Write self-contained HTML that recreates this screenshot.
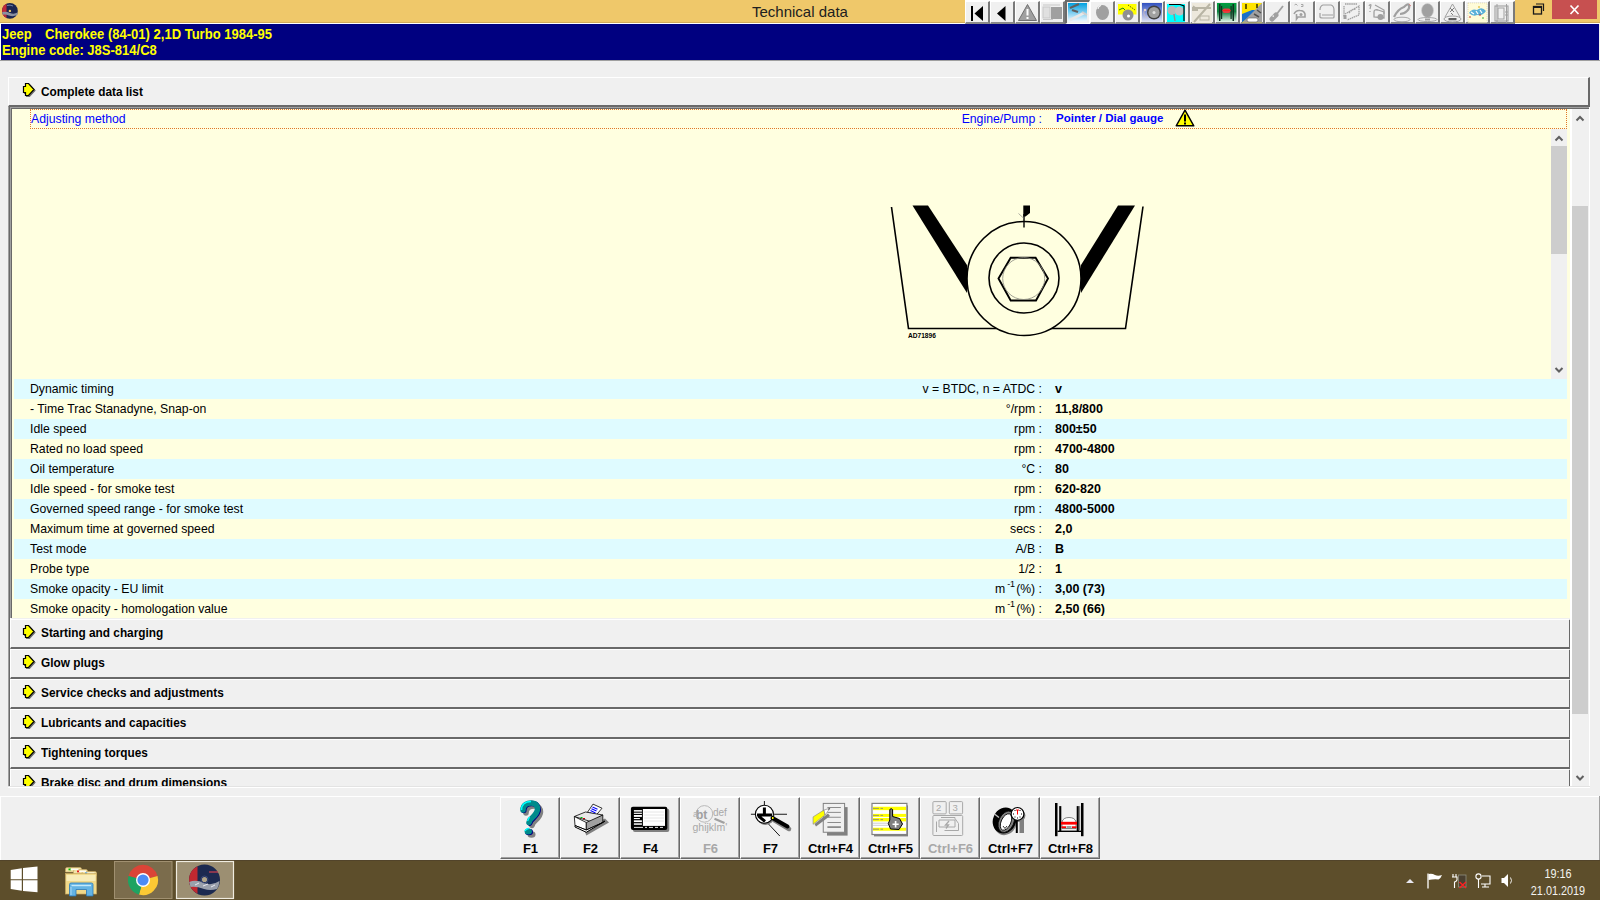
<!DOCTYPE html>
<html><head><meta charset="utf-8">
<style>
*{box-sizing:border-box;margin:0;padding:0}
html,body{width:1600px;height:900px;overflow:hidden;background:#f0f0f0;font-family:"Liberation Sans",sans-serif;position:relative}
.a{position:absolute}
#title{left:0;top:0;width:1600px;height:22px;background:#efc86a}
#title .txt{left:752px;top:3px;font-size:15px;color:#202020;white-space:nowrap}
#navy{left:1px;top:24px;width:1598px;height:36px;background:#000080;color:#ffff00;font-weight:bold;font-size:14px;white-space:pre}
#navy div{transform:scaleX(0.93);transform-origin:0 0}
.hdr{background:#f0f0f0;border-top:1px solid #fff;border-left:1px solid #fff;border-bottom:2px solid #696969;border-right:2px solid #696969}
.hdr .t{left:32px;top:6px;font-weight:bold;font-size:13px;color:#000;white-space:nowrap;transform:scaleX(0.91);transform-origin:0 0}
.hdr svg{position:absolute;left:13px;top:5px}
.row{left:14px;width:1553px;height:20px;font-size:12.25px;color:#000;white-space:nowrap}
.row .l{left:16px;top:3px}
.row .u{right:525px;top:3px;text-align:right}
.row .v{left:1041px;top:3px;font-weight:bold;font-size:12.5px}
sup{font-size:9px;vertical-align:0;position:relative;top:-6px;margin-left:2px;margin-right:1px}
.b{background:#dffbff}
.y{background:#ffffe0}
.tb{top:1px;width:25px;height:23px;background:#f0f0f0;border-right:2px solid #7a7a7a;border-bottom:2px solid #8a8a8a;border-left:1px solid #fff;border-top:1px solid #fff}
.fb{top:797px;width:60px;height:62px;background:#f0f0f0;border-left:1px solid #fff;border-top:1px solid #fff;border-right:1px solid #696969;border-bottom:1px solid #696969;box-shadow:inset -1px -1px 0 #a0a0a0}
.fb .k{left:1px;width:57px;top:43px;text-align:center;font-weight:bold;font-size:13px;color:#000}
.fb svg{position:absolute;left:0;top:0}
.sb{background:#f0f0f0}
</style></head><body>
<!-- title bar -->
<div id="title" class="a">
  <div class="txt a">Technical data</div>
</div>
<div class="a" style="left:0;top:22px;width:1600px;height:1px;background:#d2ab5a"></div>
<div class="a" style="left:0;top:23px;width:1600px;height:1px;background:#fff"></div>
<!-- app icon -->
<svg class="a" style="left:1px;top:2px" width="18" height="18" viewBox="0 0 18 18">
  <circle cx="8.9" cy="8.9" r="7.9" fill="#1c2550"/>
  <path d="M5.5 1.8 A7.9 7.9 0 0 0 5.5 16 Z" fill="#c02838"/>
  <path d="M1.2 10 Q5 9 9 11 Q13 12.5 16.6 10.5 L16.4 13 Q12 15 8 13.5 Q4 12 1.6 12.8 Z" fill="#8a90a0"/>
  <path d="M6 3.5 Q9 2.5 12 4" stroke="#7080a8" stroke-width="1" fill="none"/>
  <circle cx="8.9" cy="8.9" r="1.2" fill="#efc86a"/>
</svg>
<!-- window controls -->
<svg class="a" style="left:1532px;top:3px" width="14" height="12" viewBox="0 0 14 12">
  <rect x="1.5" y="3.5" width="8" height="7.5" fill="none" stroke="#1a1a1a" stroke-width="1.3"/>
  <rect x="1.5" y="3.5" width="8" height="1.5" fill="#1a1a1a"/>
  <path d="M4 1 H11.5 V8" fill="none" stroke="#1a1a1a" stroke-width="1.2"/>
</svg>
<div class="a" style="left:1552px;top:0;width:45px;height:19px;background:#c75050"></div>
<svg class="a" style="left:1568px;top:4px" width="14" height="12" viewBox="0 0 14 12">
  <path d="M2.5 1.5 L10.5 10 M10.5 1.5 L2.5 10" stroke="#fff" stroke-width="1.7"/>
</svg>
<!-- toolbar -->
<div id="toolbar" class="a" style="left:965px;top:0;width:550px;height:25px;background:#fff"></div>
<div class="a tb" style="left:965px"></div>
<svg class="a" style="left:965px;top:0" width="25" height="25" viewBox="0 0 25 25"><rect x="6" y="6" width="2" height="15" fill="#000"/><polygon points="9.5,13.5 18,6 18,21" fill="#000"/></svg>
<div class="a tb" style="left:990px"></div>
<svg class="a" style="left:990px;top:0" width="25" height="25" viewBox="0 0 25 25"><polygon points="7,13.5 15.5,6 15.5,21" fill="#000"/></svg>
<div class="a tb" style="left:1015px"></div>
<svg class="a" style="left:1015px;top:0" width="25" height="25" viewBox="0 0 25 25"><polygon points="12.5,4.5 21.5,20.5 3.5,20.5" fill="#a0a0a0" stroke="#707070" stroke-width="1" stroke-linejoin="round"/><rect x="11.5" y="9" width="2" height="6.5" fill="#fff"/><rect x="11.5" y="17" width="2" height="2" fill="#fff"/></svg>
<div class="a tb" style="left:1040px"></div>
<svg class="a" style="left:1040px;top:0" width="25" height="25" viewBox="0 0 25 25"><rect x="3" y="4.5" width="17" height="1" fill="#c8c8c8"/><rect x="3" y="7" width="7" height="11" fill="#e0e0e0" stroke="#c8c8c8"/><rect x="11" y="7" width="11" height="12" fill="#a0a0a0"/><rect x="3" y="19" width="10" height="1" fill="#c8c8c8"/></svg>
<div class="a" style="left:1065px;top:0;width:25px;height:24px;background:#f0f0f0;border-left:2px solid #6a6a6a;border-top:2px solid #6a6a6a;border-right:1px solid #fff;border-bottom:1px solid #fff"></div>
<svg class="a" style="left:1065px;top:0" width="25" height="25" viewBox="0 0 25 25"><defs><linearGradient id="g5" x1="0" y1="0" x2="0" y2="1"><stop offset="0" stop-color="#00a0e0"/><stop offset="1" stop-color="#f0f8ff"/></linearGradient>
<linearGradient id="g8" x1="0" y1="0" x2="0" y2="1"><stop offset="0" stop-color="#3050c0"/><stop offset="1" stop-color="#e0e4f4"/></linearGradient>
<linearGradient id="g11" x1="0" y1="0" x2="0" y2="1"><stop offset="0" stop-color="#00a040"/><stop offset="0.45" stop-color="#108040"/><stop offset="1" stop-color="#e8f8ec"/></linearGradient></defs>
<rect x="3" y="3" width="19" height="18.5" fill="url(#g5)"/>
<path d="M5 8 L14 4 M7 10 L13 12" stroke="#606060" stroke-width="2.2"/>
<path d="M5 20 L19 13" stroke="#e8e8e8" stroke-width="2.6"/><path d="M17 12 L22 15" stroke="#d0d0d0" stroke-width="2"/></svg>
<div class="a tb" style="left:1090px"></div>
<svg class="a" style="left:1090px;top:0" width="25" height="25" viewBox="0 0 25 25"><ellipse cx="12.5" cy="12.5" rx="6.5" ry="7.5" fill="#a0a0a0"/><path d="M8 9 Q8.5 6 11 5.5" stroke="#fff" stroke-width="1" fill="none"/></svg>
<div class="a tb" style="left:1115px"></div>
<svg class="a" style="left:1115px;top:0" width="25" height="25" viewBox="0 0 25 25"><rect x="3" y="4" width="18.5" height="10.5" fill="#ffff00"/><path d="M4 10 L8 8 L10 10" stroke="#208020" stroke-width="1" fill="none"/><path d="M13 5 L20 10" stroke="#404000" stroke-width="0.8" stroke-dasharray="1.5 1"/><circle cx="13" cy="15" r="5.5" fill="#909090"/><circle cx="13.5" cy="16" r="1.5" fill="#fff"/></svg>
<div class="a tb" style="left:1140px"></div>
<svg class="a" style="left:1140px;top:0" width="25" height="25" viewBox="0 0 25 25"><rect x="2" y="3" width="20" height="19" fill="url(#g8)"/><circle cx="14" cy="12.5" r="7" fill="#404040"/><circle cx="14" cy="12.5" r="5.5" fill="#a0a0a0"/><circle cx="14" cy="12.5" r="1.5" fill="#e0e0e0"/><path d="M4 11 Q3 17 8 18" stroke="#d0c0c0" stroke-width="0.8" fill="none"/><circle cx="5" cy="10" r="1.3" fill="#e0d0d0"/></svg>
<div class="a tb" style="left:1165px"></div>
<svg class="a" style="left:1165px;top:0" width="25" height="25" viewBox="0 0 25 25"><rect x="2" y="4" width="18" height="18" fill="#00ffff"/><circle cx="7" cy="10.5" r="4.5" fill="#b8b8b8"/><circle cx="14.5" cy="11" r="4.5" fill="#c0c0c0"/><path d="M4 4.5 H15 L19 6 V21" stroke="#000" stroke-width="1.2" fill="none"/><path d="M9 14 L10 21" stroke="#909090" stroke-width="1.5"/></svg>
<div class="a tb" style="left:1190px"></div>
<svg class="a" style="left:1190px;top:0" width="25" height="25" viewBox="0 0 25 25"><rect x="2" y="3" width="20" height="20" fill="#ede8dc"/><path d="M2 8 H21 M4 22 L20 4 M2 10 H8" stroke="#b8b4a4" stroke-width="2"/><path d="M3 6 L7 9" stroke="#b8b4a4" stroke-width="1.5"/><rect x="10" y="16" width="9" height="4" fill="none" stroke="#b8b4a4" stroke-width="1"/></svg>
<div class="a tb" style="left:1215px"></div>
<svg class="a" style="left:1215px;top:0" width="25" height="25" viewBox="0 0 25 25"><rect x="2" y="3" width="19.5" height="19" fill="url(#g11)"/><rect x="4" y="4" width="1.5" height="17" fill="#103020"/><rect x="17.5" y="4" width="1.5" height="17" fill="#103020"/><rect x="6" y="6" width="1.2" height="13" fill="#103020"/><rect x="15.5" y="6" width="1.2" height="13" fill="#103020"/><rect x="7.5" y="8.5" width="8" height="4.5" rx="2" fill="#e04040"/><rect x="7.5" y="10" width="8" height="1" fill="#ff2020"/></svg>
<div class="a tb" style="left:1240px"></div>
<svg class="a" style="left:1240px;top:0" width="25" height="25" viewBox="0 0 25 25"><rect x="2" y="3" width="20" height="19.5" fill="#ffe400"/><polygon points="2,14 12,10 18,10 2,22.5" fill="#1a70c8"/><polygon points="22,3 22,22.5 2.5,22.5" fill="#a0a0a0"/><path d="M17 10 L21 13 M14 14 L19 17" stroke="#505050" stroke-width="1.5"/><rect x="7" y="18" width="11" height="4" rx="2" fill="#fff" stroke="#606060" stroke-width="0.6"/><path d="M6 4 V9 M17 4 V8" stroke="#000" stroke-width="1.2"/></svg>
<div class="a tb" style="left:1265px"></div>
<svg class="a" style="left:1265px;top:0" width="25" height="25" viewBox="0 0 25 25"><path d="M7 19 L11 15" stroke="#a0a0a0" stroke-width="5" stroke-linecap="round"/><path d="M11 15 L18 6" stroke="#a0a0a0" stroke-width="1.8"/><rect x="7.5" y="15.5" width="1.5" height="1.2" fill="#fff"/></svg>
<div class="a tb" style="left:1290px"></div>
<svg class="a" style="left:1290px;top:0" width="25" height="25" viewBox="0 0 25 25"><path d="M4.5 5 L6 4 L7.5 5.5 M11 4.5 H13 V6.5 H11" stroke="#a0a0a0" stroke-width="0.9" fill="none"/><path d="M4 14 Q6 10 10 10.5 Q14 10.5 15 14 L15 17 H8 L6.5 19 V14" stroke="#a0a0a0" stroke-width="1.6" fill="none"/><circle cx="11" cy="14.5" r="1.5" fill="#a0a0a0"/></svg>
<div class="a tb" style="left:1315px"></div>
<svg class="a" style="left:1315px;top:0" width="25" height="25" viewBox="0 0 25 25"><path d="M5 13 V17 Q5 18 8 18 H18 Q19 18 19 17 V10 Q19 6 16 5 H8 Q5 6 5 10" stroke="#a0a0a0" stroke-width="1.2" fill="none"/><path d="M7 15 H18" stroke="#a0a0a0" stroke-width="1"/></svg>
<div class="a tb" style="left:1340px"></div>
<svg class="a" style="left:1340px;top:0" width="25" height="25" viewBox="0 0 25 25"><path d="M5 4 H17 M4 6 V17 M5 14 L19 6 V15 L7 20 M9 13 Q12 9 16 9" stroke="#a0a0a0" stroke-width="1.3" fill="none" stroke-dasharray="1.5 0.6"/><rect x="3.5" y="15" width="3" height="4" fill="#a0a0a0"/></svg>
<div class="a tb" style="left:1365px"></div>
<svg class="a" style="left:1365px;top:0" width="25" height="25" viewBox="0 0 25 25"><path d="M4 6 Q5 4 6 5 L5 9 M5 11 V12 M10 5 L19 10 V14" stroke="#a0a0a0" stroke-width="1.2" fill="none"/><path d="M9 12 Q9 9 13 10 L19 12 V18 L9 17 Z" stroke="#a0a0a0" stroke-width="1.3" fill="none"/><circle cx="15.5" cy="17" r="3" fill="#a0a0a0"/></svg>
<div class="a tb" style="left:1390px"></div>
<svg class="a" style="left:1390px;top:0" width="25" height="25" viewBox="0 0 25 25"><path d="M4 17 Q8 9 14 7 Q18 3 19 5 Q20 8 17 11 Q14 14 10 14" stroke="#a0a0a0" stroke-width="2.2" fill="none"/><ellipse cx="12" cy="19.5" rx="8" ry="2.3" fill="none" stroke="#a0a0a0" stroke-width="0.9"/><path d="M19 4 L21 6" stroke="#e08080" stroke-width="0.8"/></svg>
<div class="a tb" style="left:1415px"></div>
<svg class="a" style="left:1415px;top:0" width="25" height="25" viewBox="0 0 25 25"><ellipse cx="12.5" cy="10.5" rx="6" ry="7" fill="#a0a0a0"/><ellipse cx="12.5" cy="10.5" rx="6" ry="7" fill="none" stroke="#d0d0d0" stroke-width="0.6"/><ellipse cx="12.5" cy="19.5" rx="9.5" ry="2" fill="none" stroke="#a0a0a0" stroke-width="0.9"/><rect x="10" y="18.5" width="5" height="2" fill="#a0a0a0"/></svg>
<div class="a tb" style="left:1440px"></div>
<svg class="a" style="left:1440px;top:0" width="25" height="25" viewBox="0 0 25 25"><path d="M12.5 4 L20 17 M12.5 4 L5 17" stroke="#a0a0a0" stroke-width="1"/><path d="M10 8 L14 12 M14 8 L10 12 M11 13 L13 15" stroke="#707070" stroke-width="0.9"/><ellipse cx="12.5" cy="19" rx="8.5" ry="3" fill="none" stroke="#a0a0a0" stroke-width="1"/><rect x="8.5" y="18" width="8" height="2.3" fill="#606060"/></svg>
<div class="a tb" style="left:1465px"></div>
<svg class="a" style="left:1465px;top:0" width="25" height="25" viewBox="0 0 25 25"><rect x="3" y="3" width="19" height="19.5" fill="#fffbd8" stroke="#d8d0a0" stroke-width="0.6" stroke-dasharray="1 1"/><path d="M4 13 Q7 8 12 10 Q17 6 21 11 Q18 16 12 15 Q8 17 4 13Z" fill="#5ab0d8"/><path d="M6 12 L9 14 M11 11 L13 14 M15 10 L17 13" stroke="#fff" stroke-width="1.2"/><circle cx="5" cy="17" r="0.8" fill="#c02020"/><circle cx="15" cy="15" r="0.8" fill="#c02020"/><circle cx="18" cy="18" r="0.8" fill="#20a020"/><circle cx="14" cy="7" r="0.8" fill="#d0a000"/></svg>
<div class="a tb" style="left:1490px"></div>
<svg class="a" style="left:1490px;top:0" width="25" height="25" viewBox="0 0 25 25"><rect x="5" y="6" width="13" height="15" fill="none" stroke="#a0a0a0" stroke-width="1.1"/><rect x="8" y="8" width="6" height="11" fill="none" stroke="#a0a0a0" stroke-width="1"/><path d="M7 4 V23 M16.5 4 V23 M15 12 H18 M15 15 H18" stroke="#a0a0a0" stroke-width="1"/></svg>
<!--/toolbar-->

<!-- navy -->
<div id="navy" class="a"><div class="a" style="left:1px;top:2px">Jeep</div><div class="a" style="left:44px;top:2px">Cherokee (84-01) 2,1D Turbo 1984-95</div><div class="a" style="left:1px;top:18px">Engine code: J8S-814/C8</div></div>
<div class="a" style="left:0;top:23px;width:1px;height:37px;background:#fff"></div>
<div class="a" style="left:0;top:60px;width:1600px;height:1px;background:#a0a0a0"></div>

<!-- complete data list header -->
<div class="a hdr" style="left:8px;top:77px;width:1582px;height:30px">
  <svg width="15" height="15" viewBox="0 0 15 15"><polygon points="4.5,1.5 7.5,1.5 13,7.5 7.5,13.5 4.5,13.5 4.5,10.5 2.5,10.5 2.5,4.5 4.5,4.5" fill="#707070" stroke="#707070" stroke-width="1.1"/><polygon points="3.5,0.5 6.5,0.5 12,6.5 6.5,12.5 3.5,12.5 3.5,9.5 1.5,9.5 1.5,3.5 3.5,3.5" fill="#ffff00" stroke="#000" stroke-width="1.2"/></svg>
  <div class="t a">Complete data list</div>
</div>

<!-- frame -->
<div class="a" style="left:8px;top:107px;width:1581px;height:1px;background:#a0a0a0"></div><div class="a" style="left:9px;top:108px;width:1580px;height:1px;background:#696969"></div>
<div class="a" style="left:8px;top:107px;width:1px;height:680px;background:#a0a0a0"></div><div class="a" style="left:10px;top:618px;width:1px;height:168px;background:#fff"></div>
<div class="a" style="left:9px;top:107px;width:1px;height:679px;background:#696969"></div><div class="a" style="left:10px;top:108px;width:1px;height:510px;background:#a0a0a0"></div>
<div class="a" style="left:11px;top:109px;width:1px;height:509px;background:#696969"></div>
<div id="panel" class="a y" style="left:12px;top:109px;width:1558px;height:509px"></div>

<!-- adjusting method row -->
<div class="a" style="left:30px;top:109px;width:1537px;height:20px;border:1px dotted #e07828;color:#0000ff;font-size:12.25px;white-space:nowrap">
  <div class="a" style="left:0;top:2px">Adjusting method</div>
  <div class="a" style="right:524px;top:2px">Engine/Pump :</div>
  <div class="a" style="left:1025px;top:2px;font-weight:bold;font-size:11.5px">Pointer / Dial gauge</div>
</div>
<svg class="a" style="left:1175px;top:109px" width="20" height="18" viewBox="0 0 20 18">
  <polygon points="10,1.2 18.8,16.8 1.2,16.8" fill="#ffff00" stroke="#000" stroke-width="1.4" stroke-linejoin="round"/>
  <rect x="9" y="5.5" width="2" height="7" fill="#000"/>
  <rect x="9" y="13.5" width="2" height="2" fill="#000"/>
</svg>

<!-- inner scrollbar -->
<div class="a sb" style="left:1551px;top:129px;width:16px;height:250px"></div>
<div class="a" style="left:1551px;top:146px;width:16px;height:108px;background:#cdcdcd"></div>
<svg class="a" style="left:1551px;top:132px" width="16" height="12" viewBox="0 0 16 12"><path d="M4.5 8.5 L8 5 L11.5 8.5" fill="none" stroke="#606060" stroke-width="2"/></svg>
<svg class="a" style="left:1551px;top:364px" width="16" height="12" viewBox="0 0 16 12"><path d="M4.5 4 L8 7.5 L11.5 4" fill="none" stroke="#606060" stroke-width="2"/></svg>

<!-- diagram -->
<svg class="a" style="left:880px;top:190px" width="280" height="160" viewBox="880 190 280 160">
  <g fill="none" stroke="#000" stroke-width="1.6">
    <polyline points="891.5,207 908.5,328.5 1125.5,328.5 1143,206.5"/>
    <circle cx="1024" cy="278.5" r="57" fill="#ffffe0"/>
    <circle cx="1024" cy="278" r="35"/>
    <polygon points="998.5,278.5 1010.7,257.8 1035.6,257.8 1048,278.5 1036,300.5 1010.7,300.5" stroke-width="1.9"/>
    <circle cx="1023.7" cy="278.5" r="21" stroke-width="0.8" stroke="#8a8a80"/>
    <line x1="1024" y1="214" x2="1024" y2="227.5" stroke-width="1.4"/>
  </g>
  <polygon points="912.5,205.5 928,205.5 967,265 967,293" fill="#000"/>
  <polygon points="1118,205.5 1135,205.5 1081,293 1081,265" fill="#000"/>
  <polygon points="1023.3,205.5 1030,205.5 1030,213 1025.5,216.5 1023.3,216.5" fill="#000"/><line x1="1018.5" y1="213.5" x2="1024" y2="218.5" stroke="#777" stroke-width="0.6"/>
  <text x="908" y="338" font-family="Liberation Sans" font-weight="bold" font-size="6.6" fill="#000">AD71896</text>
</svg>

<!-- data rows -->
<div id="rows"><div class="a row b" style="top:379px;height:20px"><div class="a l">Dynamic timing</div><div class="a u">v = BTDC, n = ATDC :</div><div class="a v">v</div></div>
<div class="a row y" style="top:399px;height:20px"><div class="a l">- Time Trac Stanadyne, Snap-on</div><div class="a u">°/rpm :</div><div class="a v">11,8/800</div></div>
<div class="a row b" style="top:419px;height:20px"><div class="a l">Idle speed</div><div class="a u">rpm :</div><div class="a v">800±50</div></div>
<div class="a row y" style="top:439px;height:20px"><div class="a l">Rated no load speed</div><div class="a u">rpm :</div><div class="a v">4700-4800</div></div>
<div class="a row b" style="top:459px;height:20px"><div class="a l">Oil temperature</div><div class="a u">°C :</div><div class="a v">80</div></div>
<div class="a row y" style="top:479px;height:20px"><div class="a l">Idle speed - for smoke test</div><div class="a u">rpm :</div><div class="a v">620-820</div></div>
<div class="a row b" style="top:499px;height:20px"><div class="a l">Governed speed range - for smoke test</div><div class="a u">rpm :</div><div class="a v">4800-5000</div></div>
<div class="a row y" style="top:519px;height:20px"><div class="a l">Maximum time at governed speed</div><div class="a u">secs :</div><div class="a v">2,0</div></div>
<div class="a row b" style="top:539px;height:20px"><div class="a l">Test mode</div><div class="a u">A/B :</div><div class="a v">B</div></div>
<div class="a row y" style="top:559px;height:20px"><div class="a l">Probe type</div><div class="a u">1/2 :</div><div class="a v">1</div></div>
<div class="a row b" style="top:579px;height:20px"><div class="a l">Smoke opacity - EU limit</div><div class="a u">m<sup>-1</sup>(%) :</div><div class="a v">3,00 (73)</div></div>
<div class="a row y" style="top:599px;height:18px"><div class="a l">Smoke opacity - homologation value</div><div class="a u">m<sup>-1</sup>(%) :</div><div class="a v">2,50 (66)</div></div></div>

<!-- section headers -->
<div id="sections"><div class="a" style="left:10px;top:619px;width:1561px;height:167px;overflow:hidden"><div class="a hdr" style="left:0;top:0px;width:1561px;height:30px"><svg style="left:11px;top:5px" width="15" height="15" viewBox="0 0 15 15"><polygon points="4.5,1.5 7.5,1.5 13,7.5 7.5,13.5 4.5,13.5 4.5,10.5 2.5,10.5 2.5,4.5 4.5,4.5" fill="#707070" stroke="#707070" stroke-width="1.1"/><polygon points="3.5,0.5 6.5,0.5 12,6.5 6.5,12.5 3.5,12.5 3.5,9.5 1.5,9.5 1.5,3.5 3.5,3.5" fill="#ffff00" stroke="#000" stroke-width="1.2"/></svg><div class="t a" style="left:30px;top:5px">Starting and charging</div></div>
<div class="a hdr" style="left:0;top:30px;width:1561px;height:30px"><svg style="left:11px;top:5px" width="15" height="15" viewBox="0 0 15 15"><polygon points="4.5,1.5 7.5,1.5 13,7.5 7.5,13.5 4.5,13.5 4.5,10.5 2.5,10.5 2.5,4.5 4.5,4.5" fill="#707070" stroke="#707070" stroke-width="1.1"/><polygon points="3.5,0.5 6.5,0.5 12,6.5 6.5,12.5 3.5,12.5 3.5,9.5 1.5,9.5 1.5,3.5 3.5,3.5" fill="#ffff00" stroke="#000" stroke-width="1.2"/></svg><div class="t a" style="left:30px;top:5px">Glow plugs</div></div>
<div class="a hdr" style="left:0;top:60px;width:1561px;height:30px"><svg style="left:11px;top:5px" width="15" height="15" viewBox="0 0 15 15"><polygon points="4.5,1.5 7.5,1.5 13,7.5 7.5,13.5 4.5,13.5 4.5,10.5 2.5,10.5 2.5,4.5 4.5,4.5" fill="#707070" stroke="#707070" stroke-width="1.1"/><polygon points="3.5,0.5 6.5,0.5 12,6.5 6.5,12.5 3.5,12.5 3.5,9.5 1.5,9.5 1.5,3.5 3.5,3.5" fill="#ffff00" stroke="#000" stroke-width="1.2"/></svg><div class="t a" style="left:30px;top:5px">Service checks and adjustments</div></div>
<div class="a hdr" style="left:0;top:90px;width:1561px;height:30px"><svg style="left:11px;top:5px" width="15" height="15" viewBox="0 0 15 15"><polygon points="4.5,1.5 7.5,1.5 13,7.5 7.5,13.5 4.5,13.5 4.5,10.5 2.5,10.5 2.5,4.5 4.5,4.5" fill="#707070" stroke="#707070" stroke-width="1.1"/><polygon points="3.5,0.5 6.5,0.5 12,6.5 6.5,12.5 3.5,12.5 3.5,9.5 1.5,9.5 1.5,3.5 3.5,3.5" fill="#ffff00" stroke="#000" stroke-width="1.2"/></svg><div class="t a" style="left:30px;top:5px">Lubricants and capacities</div></div>
<div class="a hdr" style="left:0;top:120px;width:1561px;height:30px"><svg style="left:11px;top:5px" width="15" height="15" viewBox="0 0 15 15"><polygon points="4.5,1.5 7.5,1.5 13,7.5 7.5,13.5 4.5,13.5 4.5,10.5 2.5,10.5 2.5,4.5 4.5,4.5" fill="#707070" stroke="#707070" stroke-width="1.1"/><polygon points="3.5,0.5 6.5,0.5 12,6.5 6.5,12.5 3.5,12.5 3.5,9.5 1.5,9.5 1.5,3.5 3.5,3.5" fill="#ffff00" stroke="#000" stroke-width="1.2"/></svg><div class="t a" style="left:30px;top:5px">Tightening torques</div></div>
<div class="a hdr" style="left:0;top:150px;width:1561px;height:30px"><svg style="left:11px;top:5px" width="15" height="15" viewBox="0 0 15 15"><polygon points="4.5,1.5 7.5,1.5 13,7.5 7.5,13.5 4.5,13.5 4.5,10.5 2.5,10.5 2.5,4.5 4.5,4.5" fill="#707070" stroke="#707070" stroke-width="1.1"/><polygon points="3.5,0.5 6.5,0.5 12,6.5 6.5,12.5 3.5,12.5 3.5,9.5 1.5,9.5 1.5,3.5 3.5,3.5" fill="#ffff00" stroke="#000" stroke-width="1.2"/></svg><div class="t a" style="left:30px;top:5px">Brake disc and drum dimensions</div></div></div></div>

<!-- outer scrollbar -->
<div class="a" style="left:1570px;top:109px;width:2px;height:677px;background:#fff"></div>
<div class="a sb" style="left:1572px;top:109px;width:17px;height:677px"></div>
<div class="a" style="left:1589px;top:107px;width:1px;height:679px;background:#fff"></div>
<div class="a" style="left:1572px;top:206px;width:16px;height:508px;background:#cdcdcd"></div>
<svg class="a" style="left:1572px;top:112px" width="16" height="12" viewBox="0 0 16 12"><path d="M4.5 8.5 L8 5 L11.5 8.5" fill="none" stroke="#606060" stroke-width="2"/></svg>
<svg class="a" style="left:1572px;top:772px" width="16" height="12" viewBox="0 0 16 12"><path d="M4.5 4 L8 7.5 L11.5 4" fill="none" stroke="#606060" stroke-width="2"/></svg>

<div class="a" style="left:8px;top:786px;width:1582px;height:1px;background:#e3e3e3"></div>
<div class="a" style="left:8px;top:787px;width:1582px;height:1px;background:#fff"></div>

<!-- bottom toolbar -->
<div class="a" style="left:0;top:796px;width:1600px;height:1px;background:#fff"></div><div class="a" style="left:0;top:796px;width:1px;height:64px;background:#fff"></div><div class="a" style="left:1599px;top:796px;width:1px;height:64px;background:#a0a0a0"></div>
<!--fkeys--><div id="fkeys"><div class="a fb" style="left:500px"><svg width="60" height="62" viewBox="0 0 60 62" style="left:-1px;top:-1px">
<g transform="translate(3,3)" fill="none" stroke="#808080" stroke-width="5.5" stroke-linecap="round"><path d="M23 13 C23 7 28 6 31 6 C36 6 37.5 9 37.5 12 C37.5 17 33 19.5 30 23 L29 25.5"/></g>
<ellipse cx="31.5" cy="37.5" rx="4" ry="3.3" fill="#808080"/>
<g fill="none" stroke="#000080" stroke-width="5.5" stroke-linecap="round" transform="translate(0.8,0.6)"><path d="M23 13 C23 7 28 6 31 6 C36 6 37.5 9 37.5 12 C37.5 17 33 19.5 30 23 L29 25.5"/></g>
<g fill="none" stroke="#008b8b" stroke-width="5.5" stroke-linecap="round"><path d="M23 13 C23 7 28 6 31 6 C36 6 37.5 9 37.5 12 C37.5 17 33 19.5 30 23 L29 25.5"/></g>
<path d="M21.5 13 C21.5 7 26 4.5 31 4.5" fill="none" stroke="#00ffff" stroke-width="1.6"/>
<path d="M27.5 24 L29.5 20" fill="none" stroke="#00ffff" stroke-width="1.4"/>
<ellipse cx="29" cy="35" rx="4" ry="3.3" fill="#000080"/>
<ellipse cx="28.3" cy="34.4" rx="3.7" ry="3" fill="#008b8b"/>
<path d="M25 34 Q26 31.5 29 31.3" stroke="#00ffff" stroke-width="1.3" fill="none"/>
</svg><div class="a k" style="color:#000">F1</div></div>
<div class="a fb" style="left:560px"><svg width="60" height="62" viewBox="0 0 60 62" style="left:-1px;top:-1px">
<polygon points="26.3,38.5 49,25.5 45,21.5 24,32" fill="#808080"/>
<polygon points="27.4,15.4 33,7.1 42,11.25 35,19.5" fill="#fff" stroke="#000" stroke-width="0.8"/>
<path d="M32.5 10 L37.5 12.3 M31.5 11.8 L36.5 14.1 M30.5 13.6 L35.5 15.9 M29.5 15.4 L34.5 17.7" stroke="#0000ff" stroke-width="1.1"/>
<polygon points="14.3,19.5 25.5,15 42.8,18 31.5,24.8" fill="#e8e8e8" stroke="#000" stroke-width="0.8"/>
<polygon points="14.3,19.5 26.3,25.5 26.3,33 15,28.5" fill="#fff" stroke="#000" stroke-width="0.8"/>
<polygon points="26.3,25.5 42.8,18 42.8,25.5 26.3,33" fill="#a0a0a0" stroke="#000" stroke-width="0.8"/>
<polygon points="15,28.5 26.3,33 42.8,25.5 45,24 26.3,35.3 15,30" fill="#fff" stroke="#000" stroke-width="1"/>
<rect x="20.5" y="20" width="2" height="1" fill="#00c000"/><rect x="23" y="21" width="2" height="1" fill="#c00000"/>
</svg><div class="a k" style="color:#000">F2</div></div>
<div class="a fb" style="left:620px"><svg width="60" height="62" viewBox="0 0 60 62" style="left:-1px;top:-1px">
<rect x="12.9" y="11.75" width="36.4" height="23.25" rx="2" fill="#808080"/>
<rect x="10.9" y="9.75" width="36.4" height="23.25" rx="2" fill="#000"/>
<rect x="22.9" y="12" width="22.1" height="16.9" fill="#fff"/>
<path d="M24 15 H44 M24 18 H44 M24 21 H44 M24 24 H44" stroke="#e0e0e0" stroke-width="0.8"/>
<rect x="13.9" y="13.1" width="8" height="1.5" fill="#fff"/><rect x="13.9" y="15.7" width="8" height="1.2" fill="#fff"/>
<rect x="13.9" y="18" width="8" height="1.9" fill="#fff"/><rect x="13.9" y="21" width="6" height="1.1" fill="#fff"/>
<rect x="13.9" y="23.3" width="8" height="1.8" fill="#fff"/><rect x="13.9" y="26.3" width="8" height="1.5" fill="#fff"/>
<path d="M14 30.4 H23 M25 30.4 H27 M29 30.4 H33 M35 30.4 H38 M40 30.4 H43" stroke="#fff" stroke-width="0.9"/>
</svg><div class="a k" style="color:#000">F4</div></div>
<div class="a fb" style="left:680px"><svg width="60" height="62" viewBox="0 0 60 62" style="left:-1px;top:-1px">
<circle cx="24.4" cy="16.9" r="8.3" fill="none" stroke="#b8b8b8" stroke-width="1"/>
<text x="16" y="21.5" font-family="Liberation Sans" font-weight="bold" font-size="12" fill="#a0a0a0">bt</text>
<text x="13" y="20" font-family="Liberation Sans" font-size="9" fill="#b0b0b0">a</text>
<text x="33" y="19" font-family="Liberation Sans" font-size="10" fill="#a8a8a8">def</text>
<text x="12.5" y="33.5" font-family="Liberation Sans" font-size="10.5" fill="#a8a8a8">ghijklm'</text>
<path d="M34.5 21.75 L44.5 26" stroke="#a0a0a0" stroke-width="2.2"/>
</svg><div class="a k" style="color:#a8a8a8">F6</div></div>
<div class="a fb" style="left:740px"><svg width="60" height="62" viewBox="0 0 60 62" style="left:-1px;top:-1px">
<path d="M24.4 4 V8.5 M10.9 17.25 H15.5 M33.5 17.25 H47 M27.8 26.25 L39.8 39" stroke="#000" stroke-width="0.9"/>
<path d="M34 23 L49 32" stroke="#808080" stroke-width="4.5" stroke-linecap="round"/>
<circle cx="25.5" cy="19" r="9" fill="#808080"/>
<circle cx="24.4" cy="17.25" r="9" fill="#fff" stroke="#000" stroke-width="1.1"/>
<path d="M17 18 H32 M24.4 10.5 V18 M18.5 19 L25 24.5" stroke="#000" stroke-width="3"/>
<path d="M32.5 21 L47.5 29.5" stroke="#000" stroke-width="4" stroke-linecap="round"/>
<rect x="32" y="20" width="1.5" height="2" fill="#ffff00"/>
</svg><div class="a k" style="color:#000">F7</div></div>
<div class="a fb" style="left:800px"><svg width="60" height="62" viewBox="0 0 60 62" style="left:-1px;top:-1px">
<rect x="27" y="10.1" width="20.6" height="28.5" fill="#808080"/>
<rect x="23.25" y="6.4" width="21.35" height="28.85" fill="#f0f0f0" stroke="#808080" stroke-width="1"/>
<path d="M27.4 10.5 H40.9 M27.4 15.4 H40.9 M27.4 20.25 H40.9 M27.4 25.5 H40.9" stroke="#808080" stroke-width="0.9"/>
<rect x="27.4" y="29.3" width="13.5" height="1.6" fill="#808080"/>
<polygon points="14.5,27 16,29.5 30,19 28,16.5" fill="#808080"/>
<polygon points="13.1,19.9 13.1,27.3 25,18 24,13" fill="#ffff00" stroke="#808080" stroke-width="0.6"/>
<polygon points="24,13 25,18 30,11.25" fill="#fff" stroke="#808080" stroke-width="0.6"/>
<polygon points="28,11.9 30,11.25 29,12.8" fill="#000"/>
</svg><div class="a k" style="color:#000">Ctrl+F4</div></div>
<div class="a fb" style="left:860px"><svg width="60" height="62" viewBox="0 0 60 62" style="left:-1px;top:-1px">
<rect x="14" y="8.4" width="34" height="31" fill="#808080"/>
<rect x="12" y="6.4" width="34.9" height="31.1" fill="#fff" stroke="#808080" stroke-width="1.2"/>
<rect x="13" y="9.75" width="33" height="3.35" fill="#ffff00"/>
<rect x="13" y="16.9" width="33" height="3" fill="#ffff00"/>
<rect x="13" y="21" width="33" height="3.4" fill="#ffff00"/>
<rect x="13" y="30.75" width="33" height="3" fill="#ffff00"/>
<path d="M13 11.4 H19 M20.5 11.4 H23 M13 18.4 H19 M20.5 18.4 H23 M13 22.6 H19 M20.5 22.6 H23 M13 32.2 H19 M20.5 32.2 H23" stroke="#808080" stroke-width="0.8"/>
<path d="M13 26.2 H28 M13 28.3 H28" stroke="#c0c0c0" stroke-width="0.8"/>
<path d="M29.8 23 V12.5 Q31.2 10.8 32.6 12.5 V19.5 L39.5 21.5 L42.5 27 L39 32.5 L30.5 32 L28.3 26.5 Z" fill="#808080" stroke="#000" stroke-width="1"/>
<path d="M35.6 24 V30.5 M32.5 27.3 H38.7" stroke="#fff" stroke-width="1.6"/>
</svg><div class="a k" style="color:#000">Ctrl+F5</div></div>
<div class="a fb" style="left:920px"><svg width="60" height="62" viewBox="0 0 60 62" style="left:-1px;top:-1px">
<g fill="none" stroke="#a8a8a8" stroke-width="1">
<rect x="12.9" y="4.6" width="13.3" height="12.3" rx="1"/>
<rect x="29.3" y="4.6" width="13.3" height="12.3" rx="1"/>
<rect x="12.9" y="18.5" width="29.8" height="20" rx="1"/>
<path d="M21 20.5 H35 V21.5 L38.5 26.5 V33.5 H24.5 M19 23 H35 V30 H19 Z M16.5 24.5 V35"/>
</g>
<text x="16" y="13.8" font-family="Liberation Sans" font-size="9.5" fill="#a8a8a8">2</text>
<text x="32.5" y="13.8" font-family="Liberation Sans" font-size="9.5" fill="#a8a8a8">3</text>
<path d="M29 24 L25.5 28 L28.5 28 L26 31.5" stroke="#a8a8a8" stroke-width="1.3" fill="none"/>
</svg><div class="a k" style="color:#a8a8a8">Ctrl+F6</div></div>
<div class="a fb" style="left:980px"><svg width="60" height="62" viewBox="0 0 60 62" style="left:-1px;top:-1px">
<path d="M39.5 20 L44 22 V36 H39.5 Z" fill="#808080"/>
<circle cx="39" cy="18.5" r="6.4" fill="#808080"/>
<ellipse cx="25.5" cy="25.5" rx="11" ry="13" transform="rotate(25 25.5 25.5)" fill="#808080"/>
<ellipse cx="24.5" cy="23.5" rx="11.5" ry="13.3" transform="rotate(25 24.5 23.5)" fill="#000"/>
<ellipse cx="26.3" cy="24.75" rx="7.5" ry="11.3" transform="rotate(25 26.3 24.75)" fill="#808080" stroke="#000" stroke-width="0.8"/>
<ellipse cx="26" cy="25" rx="4.8" ry="8.8" transform="rotate(25 26 25)" fill="#fff" stroke="#000" stroke-width="0.8"/>
<path d="M23 29 L25 31.5 L27 29" stroke="#000" stroke-width="0.8" fill="none"/>
<path d="M14.5 17 L19 20.5" stroke="#c0c0c0" stroke-width="1.4"/>
<path d="M36.8 21 V36" stroke="#000" stroke-width="2"/>
<circle cx="37.5" cy="16.9" r="6.4" fill="#fff" stroke="#000" stroke-width="1.2"/>
<path d="M37.5 13 V17.5 M36 13 H39" stroke="#ff0000" stroke-width="1"/>
<g fill="#000"><rect x="33" y="16.5" width="1" height="1"/><rect x="41" y="16.5" width="1" height="1"/><rect x="37" y="20.5" width="1" height="1"/><rect x="34.5" y="13" width="1" height="1"/><rect x="39.5" y="13" width="1" height="1"/><rect x="34.5" y="19.5" width="1" height="1"/><rect x="39.5" y="19.5" width="1" height="1"/></g>
</svg><div class="a k" style="color:#000">Ctrl+F7</div></div>
<div class="a fb" style="left:1040px"><svg width="60" height="62" viewBox="0 0 60 62" style="left:-1px;top:-1px">
<rect x="15" y="6" width="2.5" height="33.2" fill="#000"/>
<rect x="41" y="6" width="2.5" height="33.2" fill="#000"/>
<rect x="19.2" y="9.1" width="2.1" height="25.9" fill="#000"/>
<rect x="36.7" y="9.1" width="2.1" height="25.9" fill="#000"/>
<rect x="38.8" y="9.1" width="1.4" height="24" fill="#808080"/>
<rect x="17.5" y="33.6" width="23.5" height="1.4" fill="#000"/>
<path d="M22 31.5 V25 Q23 20.5 29 20.5 Q35 20.5 36 25 V31.5 Z" fill="#fff" stroke="#505050" stroke-width="0.7"/>
<rect x="21" y="24.8" width="16" height="2.8" fill="#ff0000"/>
<rect x="21.5" y="29.3" width="4.5" height="1.8" fill="#ff0000"/>
<rect x="32" y="29.3" width="4.5" height="1.8" fill="#ff0000"/>
<rect x="26.5" y="29" width="5" height="2" fill="#a0a0a0"/>
</svg><div class="a k" style="color:#000">Ctrl+F8</div></div></div><!--/fkeys-->
<!-- taskbar -->
<div id="taskbar" class="a" style="left:0;top:860px;width:1600px;height:40px;background:#5d4e2b"></div>
<div class="a" style="left:0;top:860px;width:1600px;height:1px;background:#52442a"></div>
<svg class="a" style="left:0;top:860px" width="260" height="40" viewBox="0 860 260 40">
  <polygon points="10.7,870 21.8,868.3 21.8,879.2 10.7,879.2" fill="#fff"/>
  <polygon points="23,868.1 37.5,866.5 37.5,879.2 23,879.2" fill="#fff"/>
  <polygon points="10.7,880.3 21.8,880.3 21.8,890.8 10.7,889" fill="#fff"/>
  <polygon points="23,880.3 37.5,880.3 37.5,892.2 23,891" fill="#fff"/>
  <!-- explorer -->
  <path d="M65.5 869 Q65.5 867.5 67 867.5 H80 Q81.5 867.5 81.5 869 V872 H65.5 Z" fill="#f2e2a8" stroke="#c8a860" stroke-width="0.6"/>
  <path d="M73.5 871 Q73.5 869.5 75 869.5 H86 Q87.5 869.5 87.5 871 V874 H73.5 Z" fill="#f2e2a8" stroke="#c8a860" stroke-width="0.6"/>
  <path d="M82 873 Q82 871.5 83.5 871.5 H95 Q96.5 871.5 96.5 873 V876 H82 Z" fill="#f2e2a8" stroke="#c8a860" stroke-width="0.6"/>
  <rect x="68.5" y="868.5" width="2.5" height="1.8" fill="#00c000"/>
  <rect x="77" y="870.5" width="2.5" height="1.8" fill="#e02020"/>
  <rect x="85" y="872.5" width="2.5" height="1.8" fill="#2090f0"/>
  <rect x="70.5" y="868.7" width="8" height="1.2" fill="#fff"/>
  <rect x="79" y="870.7" width="7" height="1.2" fill="#fff"/>
  <rect x="87" y="872.7" width="7" height="1.2" fill="#fff"/>
  <rect x="65.5" y="873.5" width="31" height="20.5" fill="#f0d98a" stroke="#c8a860" stroke-width="0.7"/>
  <rect x="66.5" y="875" width="29" height="6" fill="#f8ecb8"/>
  <path d="M69.5 896 V884.5 Q69.5 883 71 883 H91.5 Q93 883 93 884.5 V896 H86.5 V889.5 H76 V896 Z" fill="#64b4e4" stroke="#2a78b8" stroke-width="0.8"/>
  <path d="M71.5 885.5 H91" stroke="#c4e8fa" stroke-width="1.4"/>
  <path d="M71 887 V895" stroke="#a8d8f4" stroke-width="1"/>
  <!-- chrome box -->
  <rect x="114.5" y="861.5" width="57.5" height="37" fill="#7b6c4c" stroke="#a09070" stroke-width="1"/>
  <path d="M143 880 L128.5 876 A15 15 0 0 1 157.5 876 Z" fill="#db4437"/>
  <path d="M143 880 L157.5 876 A15 15 0 0 1 139 894.5 Z" fill="#fcc934"/>
  <path d="M143 880 L139 894.5 A15 15 0 0 1 128.5 876 Z" fill="#1ea362"/>
  <circle cx="143" cy="880" r="7" fill="#fff"/>
  <circle cx="143" cy="880" r="5.6" fill="#4c8bf5"/>
  <!-- app box -->
  <rect x="176.5" y="861.5" width="57" height="37" fill="#9c8f72" stroke="#f0ece0" stroke-width="1.2"/>
  <circle cx="204.5" cy="880" r="15.5" fill="#1c2a50"/>
  <path d="M197.5 866.2 A15.5 15.5 0 0 0 197.5 893.8 Z" fill="#c02830"/>
  <path d="M189.2 882 Q196 879 204 883 Q212 886 219.5 881 Q219 886 217 889 Q210 891 204 889 Q196 886 190.5 887 Z" fill="#9aa0ac"/><path d="M195 885 L199 883 M203 886 L208 884 M211 887 L215 885" stroke="#e8e8f0" stroke-width="1"/><path d="M209 872 H218" stroke="#d04050" stroke-width="1.2"/>
  <circle cx="204.5" cy="879.5" r="2.6" fill="#b0a488"/><circle cx="204.5" cy="879.5" r="3.5" fill="none" stroke="#405080" stroke-width="0.8"/>
</svg>
<svg class="a" style="left:1400px;top:860px" width="125" height="40" viewBox="1400 860 125 40">
  <polygon points="1406,883 1410,879 1414,883" fill="#e8e8f0"/>
  <path d="M1428 873.5 V888.5" stroke="#fff" stroke-width="1.3"/>
  <path d="M1428.5 874 Q1432 873 1435 875 Q1438 876.5 1442 875 Q1441 878 1438.5 879.5 Q1434 879 1428.5 880" fill="#fff"/>
  <path d="M1453 874 V877 M1456 874 V877 M1452 877 H1457 V880 Q1456 882 1454.5 882 V888" stroke="#fff" stroke-width="1.1" fill="none"/>
  <rect x="1458.5" y="875" width="7.5" height="12" fill="#4a4030" stroke="#909080" stroke-width="0.8"/>
  <path d="M1459.5 882 L1466 888 M1466 882 L1459.5 888" stroke="#ff2020" stroke-width="1.4"/>
  <circle cx="1478.5" cy="876.5" r="2.6" fill="none" stroke="#fff" stroke-width="1.1"/>
  <path d="M1478.5 879 V888 M1482 876 H1490 V884 H1481 M1485 884 V886.5 M1482 887 H1489" stroke="#fff" stroke-width="1.1" fill="none"/>
  <path d="M1501.5 878 H1504 L1508 874 V887 L1504 883 H1501.5 Z" fill="#fff"/>
  <path d="M1510.5 877.5 Q1512.5 880.5 1510.5 883.5" stroke="#fff" stroke-width="0.9" fill="none"/>
</svg>
<div class="a" style="left:1520px;top:865px;width:76px;text-align:center;color:#f4f4f0;font-size:13px;line-height:17px;white-space:nowrap;transform:scaleX(0.835);transform-origin:38px 0">19:16<br>21.01.2019</div>
<!--/taskbar-->
</body></html>
